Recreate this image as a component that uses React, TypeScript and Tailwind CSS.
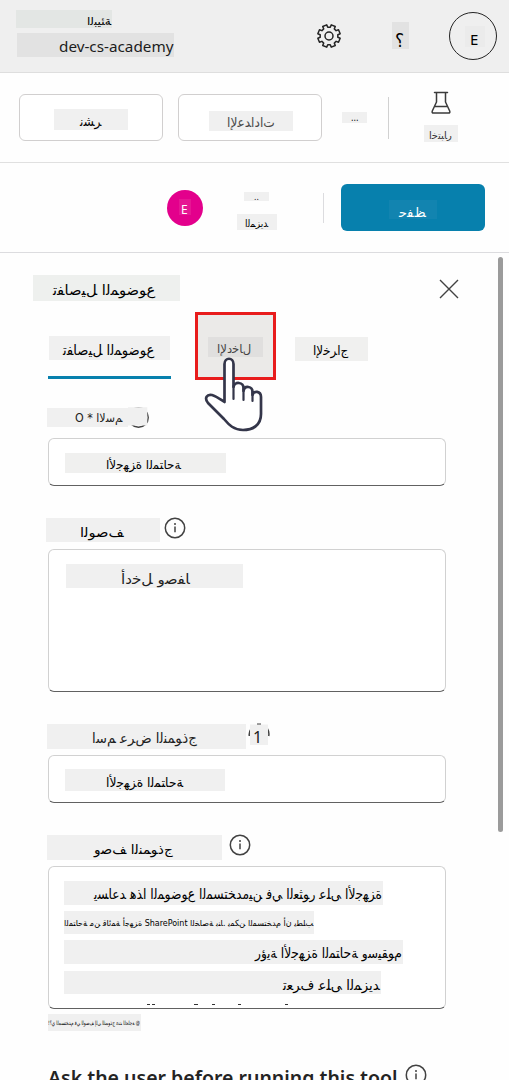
import { useLayoutEffect, useRef } from "react";
import type { ReactNode } from "react";

// Contextual forms: first code point of each letter's block and how many forms it has.
const FORMS: Record<string, [number, number]> = {
  "ء": [0xfe80, 1], "آ": [0xfe81, 2], "أ": [0xfe83, 2], "ؤ": [0xfe85, 2],
  "إ": [0xfe87, 2], "ئ": [0xfe89, 4], "ا": [0xfe8d, 2], "ب": [0xfe8f, 4],
  "ة": [0xfe93, 2], "ت": [0xfe95, 4], "ث": [0xfe99, 4], "ج": [0xfe9d, 4],
  "ح": [0xfea1, 4], "خ": [0xfea5, 4], "د": [0xfea9, 2], "ذ": [0xfeab, 2],
  "ر": [0xfead, 2], "ز": [0xfeaf, 2], "س": [0xfeb1, 4], "ش": [0xfeb5, 4],
  "ص": [0xfeb9, 4], "ض": [0xfebd, 4], "ط": [0xfec1, 4], "ظ": [0xfec5, 4],
  "ع": [0xfec9, 4], "غ": [0xfecd, 4], "ف": [0xfed1, 4], "ق": [0xfed5, 4],
  "ك": [0xfed9, 4], "ل": [0xfedd, 4], "م": [0xfee1, 4], "ن": [0xfee5, 4],
  "ه": [0xfee9, 4], "و": [0xfeed, 2], "ى": [0xfeef, 2], "ي": [0xfef1, 4],
};
const LAM_ALEF: Record<string, number> = { "آ": 0xfef5, "أ": 0xfef7, "إ": 0xfef9, "ا": 0xfefb };

function shape(text: string): string {
  let out = "";
  for (let i = 0; i < text.length; i++) {
    const form = FORMS[text[i]];
    if (!form) {
      out += text[i];
      continue;
    }
    const before = FORMS[text[i - 1]];
    const joinsBefore = !!before && before[1] === 4 && form[1] > 1;
    const next = text[i + 1];
    if (text[i] === "ل" && LAM_ALEF[next]) {
      out += String.fromCharCode(LAM_ALEF[next] + (joinsBefore ? 1 : 0));
      i++;
      continue;
    }
    const after = FORMS[next];
    const joinsAfter = form[1] === 4 && !!after && after[1] > 1;
    const index = joinsAfter ? (joinsBefore ? 3 : 2) : joinsBefore ? 1 : 0;
    out += String.fromCharCode(form[0] + index);
  }
  return out;
}

/** A text run scaled sideways to fill the given width. */
function Run({ text, width }: { text: string; width: number }) {
  const ref = useRef<HTMLElement>(null);
  useLayoutEffect(() => {
    const el = ref.current;
    if (el && el.offsetWidth) el.style.transform = `scaleX(${width / el.offsetWidth})`;
  }, [text, width]);
  return (
    <bdo ref={ref} dir="ltr" className="inline-block origin-left whitespace-nowrap">
      {shape(text)}
    </bdo>
  );
}

function Patch({ text, width, className }: { text: string; width: number; className: string }) {
  return (
    <div className={`flex shrink-0 items-start leading-none ${className}`}>
      <Run text={text} width={width} />
    </div>
  );
}

function Info({ className = "" }: { className?: string }) {
  return (
    <svg className={`shrink-0 ${className}`} width="22" height="22" viewBox="0 0 22 22" fill="none" stroke="#424242" strokeWidth="1.5">
      <circle cx="11" cy="11" r="9.7" />
      <path d="M11 9.5v5.8" />
      <circle cx="11" cy="7" r="1" fill="#424242" stroke="none" />
    </svg>
  );
}

function gearPath(): string {
  const points: string[] = [];
  for (let i = 0; i < 8; i++) {
    const mid = (i * Math.PI) / 4 + Math.PI / 8;
    const corners: [number, number][] = [[-0.25, 8.9], [-0.19, 11.4], [0.19, 11.4], [0.25, 8.9]];
    for (const [a, r] of corners) {
      points.push(`${(13 + r * Math.cos(mid + a)).toFixed(2)} ${(13 + r * Math.sin(mid + a)).toFixed(2)}`);
    }
  }
  return `M${points.join("L")}Z`;
}

function Gear() {
  return (
    <svg className="mt-[23px] ml-[142px] shrink-0" width="26" height="26" viewBox="0 0 26 26" fill="none" stroke="#242424" strokeWidth="1.5" strokeLinejoin="round">
      <path d={gearPath()} />
      <circle cx="13" cy="13" r="4" />
    </svg>
  );
}

function Field({ className, children }: { className: string; children: ReactNode }) {
  return (
    <div className={`ml-12 w-[398px] shrink-0 overflow-hidden rounded-md border border-[#d1d1d1] border-b-[#616161] bg-white ${className}`}>
      {children}
    </div>
  );
}

function Hand() {
  return (
    <svg className="absolute top-[41px] left-[5px]" width="62" height="78" viewBox="0 0 62 78" fill="#fff" stroke="#34364a" strokeWidth="2.7" strokeLinejoin="round" strokeLinecap="round">
      <path d="M21.5 46V8c0-7 9-7 9 0v23c1-6 10-5 10 1v3c1-6 9-5 9 1v3c1-5 8.500-4 8.500 2v17C58 69 50 74 40 74c-9 0-14-5-19-11L5 47c-4-5-1-9 4-8 4 1 8 4 12.500 7Z" />
      <path d="M30.500 30v13M40.500 33v11M49.500 36v9" fill="none" strokeWidth="2.200" />
    </svg>
  );
}

export default function App() {
  return (
    <div className="flex h-[1080px] w-[509px] flex-col overflow-hidden bg-[#fefefe] font-['DejaVu_Sans',sans-serif] text-black">
      <header className="flex h-[73px] shrink-0 items-start border-b border-[#dedede] bg-[#efefef]">
        <div className="ml-4 flex w-[158px] flex-col pt-[10px]">
          <Patch text="البيئة" width={24} className="h-[18px] w-24 bg-[#e3e6e4] pt-[6px] pl-[71px] text-[11px]" />
          <Patch text="dev-cs-academy" width={114} className="mt-[5px] ml-px h-6 w-[157px] bg-[#e2e2e2] pt-[6px] pl-[42px] font-['Noto_Sans'] text-[15px] text-[#1c1c1c]" />
        </div>
        <Gear />
        <Patch text="؟" width={9} className="mt-[22px] ml-[50px] h-[27px] w-[17px] bg-[#e2e2e2] pt-[9px] pl-[3px] text-[19px]" />
        <div className="mt-3 ml-10 flex h-12 w-12 shrink-0 rounded-full border border-[#242424]">
          <Patch text="E" width={8} className="mt-[13px] ml-[15px] h-[21px] w-5 bg-[#ebebeb] pt-[6px] pl-[5px] font-['Noto_Sans'] text-[15px]" />
        </div>
      </header>

      <div className="flex h-[90px] shrink-0 items-start border-b border-[#e0e0e0]">
        <div className="mt-[21px] ml-[19px] h-[47px] w-36 shrink-0 rounded-md border border-[#d1cfcf] bg-white">
          <Patch text="نشر" width={21} className="mt-[14px] ml-[34px] h-[21px] w-[74px] bg-[#f0f0f0] pt-[6px] pl-[26px] text-[13px]" />
        </div>
        <div className="mt-[21px] ml-[15px] h-[47px] w-36 shrink-0 rounded-md border border-[#d1cfcf] bg-white">
          <Patch text="الإعدادات" width={48} className="mt-4 ml-[30px] h-5 w-[84px] bg-[#f0f0f0] pt-[5px] pl-[18px] text-[13px] text-[#4a4a4a]" />
        </div>
        <Patch text="..." width={8} className="mt-[39px] ml-5 h-[11px] w-[25px] bg-[#f0f0f0] pt-px pl-[9px] text-[10px]" />
        <div className="mt-6 ml-[21px] h-[42px] w-px bg-[#d1d1d1]" />
        <div className="ml-[35px] flex flex-col">
          <svg className="mt-[18px] ml-[7px]" width="20" height="24" viewBox="0 0 20 24" fill="none" stroke="#3b3b3b" strokeWidth="1.5" strokeLinejoin="round" strokeLinecap="round">
            <path d="M3.500 1.500h13M5.500 1.500V11L1.300 20c-.5 1.300 0 2 1.200 2h15c1.200 0 1.700-.7 1.200-2L14.500 11V1.500M3.500 15.500h13" />
          </svg>
          <Patch text="اختبار" width={23} className="mt-[10px] h-[17px] w-[34px] bg-[#f0f0f0] pt-[6px] pl-[5px] text-[10px] text-[#333]" />
        </div>
      </div>

      <div className="flex h-[90px] shrink-0 items-start border-b border-[#dcdcdf]">
        <div className="mt-[27px] ml-[167px] flex h-9 w-9 shrink-0 rounded-full bg-[#e3008c]">
          <Patch text="E" width={7} className="mt-[9px] ml-3 h-4 w-3 bg-[#e61693] pt-[5px] pl-[2px] font-['Noto_Sans'] text-[12px] text-white" />
        </div>
        <div className="ml-[34px] flex w-10 flex-col">
          <Patch text=".." width={5} className="mt-[29px] ml-[7px] h-[9px] w-[25px] bg-[#f0f0f0] pt-px pl-[10px] text-[9px]" />
          <Patch text="المزيد" width={23} className="mt-[13px] h-4 w-10 bg-[#f0f0f0] pt-[5px] pl-2 text-[10px]" />
        </div>
        <div className="mt-[30px] ml-[46px] h-[30px] w-px bg-[#dcdcdf]" />
        <div className="mt-[21px] ml-[17px] h-[47px] w-36 shrink-0 rounded-md bg-[#0780ad]">
          <Patch text="حفظ" width={27} className="mt-4 ml-12 h-[19px] w-12 bg-[#1284b0] pt-[6px] pl-[10px] text-[13px] text-white" />
        </div>
      </div>

      <main className="flex h-[827px] shrink-0">
        <div className="flex w-[498px] shrink-0 flex-col">
          <div className="flex h-[59px] shrink-0 items-start">
            <Patch text="تفاصيل الموضوع" width={102} className="mt-[22px] ml-[33px] h-[26px] w-[147px] bg-[#eef0ee] pt-2 pl-5 text-[14px]" />
            <svg className="mt-[26px] ml-[259px]" width="20" height="20" viewBox="0 0 20 20" stroke="#424242" strokeWidth="1.400">
              <path d="M1 1l18 18M19 1L1 19" />
            </svg>
          </div>

          <nav className="flex h-[68px] shrink-0 items-start">
            <div className="ml-12 h-[67px] w-[123px] border-b-[3px] border-[#0780ad]">
              <Patch text="تفاصيل الموضوع" width={91} className="mt-6 ml-px h-6 w-[121px] bg-[#f0f0f0] pt-[7px] pl-[14px] text-[14px]" />
            </div>
            <div className="relative ml-6 h-[68px] w-[81px] border-[3px] border-[#e81c1c] bg-[#ebeae8]">
              <Patch text="الإدخال" width={34} className="mt-[22px] ml-[10px] h-5 w-[55px] bg-[#e0dfde] pt-[6px] pl-[9px] text-[12px] text-[#444]" />
              <Hand />
            </div>
            <Patch text="الإخراج" width={35} className="mt-[25px] ml-[19px] h-6 w-[73px] bg-[#f0f0ef] pt-[7px] pl-[18px] text-[13px]" />
          </nav>

          <div className="flex h-[58px] shrink-0 items-start">
            <Patch text="O * الاسم" width={47} className="mt-7 ml-[47px] h-[19px] w-[81px] bg-[#f0f0f0] pt-1 pl-7 text-[12px] text-[#222]" />
            <svg className="mt-[26px]" width="22" height="23" viewBox="0 0 22 23" fill="none" stroke="#424242" strokeWidth="1.500">
              <circle cx="10.500" cy="11.500" r="9.700" />
              <path d="M0 1.200h19.300v18.300H0Z" fill="#f0f0f0" stroke="none" />
            </svg>
          </div>
          <Field className="h-12">
            <Patch text="الأجهزة المتاحة" width={75} className="mt-[14px] ml-4 h-5 w-[161px] bg-[#f0f0ef] pt-[6px] pl-[41px] text-[12px]" />
          </Field>

          <div className="flex h-[63px] shrink-0 items-start">
            <Patch text="الوصف" width={44} className="mt-8 ml-[46px] h-6 w-[114px] bg-[#f0f0f0] pt-2 pl-[34px] text-[13px]" />
            <Info className="mt-[31px] ml-1" />
          </div>
          <Field className="h-[143px]">
            <Patch text="أدخل وصفا" width={69} className="mt-[14px] ml-[17px] h-6 w-[177px] bg-[#f0f0f0] pt-2 pl-[55px] text-[14px] text-[#222]" />
          </Field>

          <div className="flex h-[63px] shrink-0 items-start">
            <Patch text="اسم عرض النموذج" width={105} className="mt-8 ml-[47px] h-[25px] w-[199px] bg-[#f0f0f0] pt-[7px] pl-[45px] text-[14px] text-[#222]" />
            <div className="relative mt-[31px] ml-[2px]">
              <svg width="22" height="22" viewBox="0 0 22 22" fill="none" stroke="#424242" strokeWidth="1.500">
                <path d="M1.300 13A9.700 9.700 0 0 1 3 6M20.700 13A9.700 9.700 0 0 0 19.500 6M9 1.300h4" />
                <path d="M2 1.500h18V22H2Z" fill="#f0f0f0" stroke="none" />
              </svg>
              <span className="absolute top-[6px] left-[5px] font-['Noto_Sans'] text-[16px] leading-none text-[#222]">1</span>
            </div>
          </div>
          <Field className="h-12">
            <Patch text="الأجهزة المتاحة" width={77} className="mt-[13px] ml-4 h-[22px] w-40 bg-[#f0f0f0] pt-[7px] pl-[41px] text-[13px]" />
          </Field>

          <div className="flex h-[63px] shrink-0 items-start">
            <Patch text="وصف النموذج" width={79} className="mt-8 ml-[47px] h-[25px] w-[175px] bg-[#f0f0f0] pt-[8px] pl-[47px] text-[13px]" />
            <Info className="mt-[31px] ml-[7px]" />
          </div>
          <Field className="h-[143px]">
            <div className="ml-[15px] flex flex-col pt-[14px]">
              <Patch text="يساعد هذا الموضوع المستخدمين في العثور على الأجهزة" width={288} className="h-6 w-[319px] bg-[#f0f0f0] pt-[6px] pl-[30px] text-[14px]" />
              <Patch text="المتاحة من قائمة أجهزة SharePoint الخاصة بنا. يمكن المستخدم أن يطلب" width={249} className="mt-[6px] h-[23px] w-[250px] bg-[#f0f0f0] pt-[8px] text-[8.500px]" />
              <Patch text="رؤية الأجهزة المتاحة وسيقوم" width={147} className="mt-[6px] h-6 w-[339px] bg-[#f0f0f0] pt-[6px] pl-[191px] text-[14px]" />
              <Patch text="تعرف على المزيد" width={97} className="mt-[7px] h-[23px] w-[317px] bg-[#f0f0f0] pt-[7px] pl-[219px] text-[14px]" />
              <div className="mt-[10px] ml-[83px] flex h-px">
                <span className="w-[3px] bg-[#333]" />
                <span className="ml-[2px] w-[3px] bg-[#333]" />
                <span className="ml-[39px] w-[4px] bg-[#333]" />
                <span className="ml-[14px] w-[3px] bg-[#333]" />
                <span className="ml-[23px] w-[3px] bg-[#333]" />
                <span className="ml-[44px] w-[3px] bg-[#333]" />
              </div>
            </div>
          </Field>
          <Patch text="!؟ي المستخدم في الوصف إلى النموذج عند الحاجة @" width={92} className="mt-[5px] ml-12 h-[17px] w-[93px] bg-[#f0f0f0] pt-[6px] text-[6px]" />
          <div className="mt-[33px] ml-12 flex items-start">
            <div className="w-[357px] text-[20px] leading-[28px] font-semibold font-['Noto_Sans'] text-[#242424]">
              <Run text="Ask the user before running this tool" width={350} />
            </div>
            <Info />
          </div>
        </div>
        <div className="mt-1 h-[575px] w-[5px] rounded-full bg-[#9b9b9b]" />
      </main>
    </div>
  );
}
